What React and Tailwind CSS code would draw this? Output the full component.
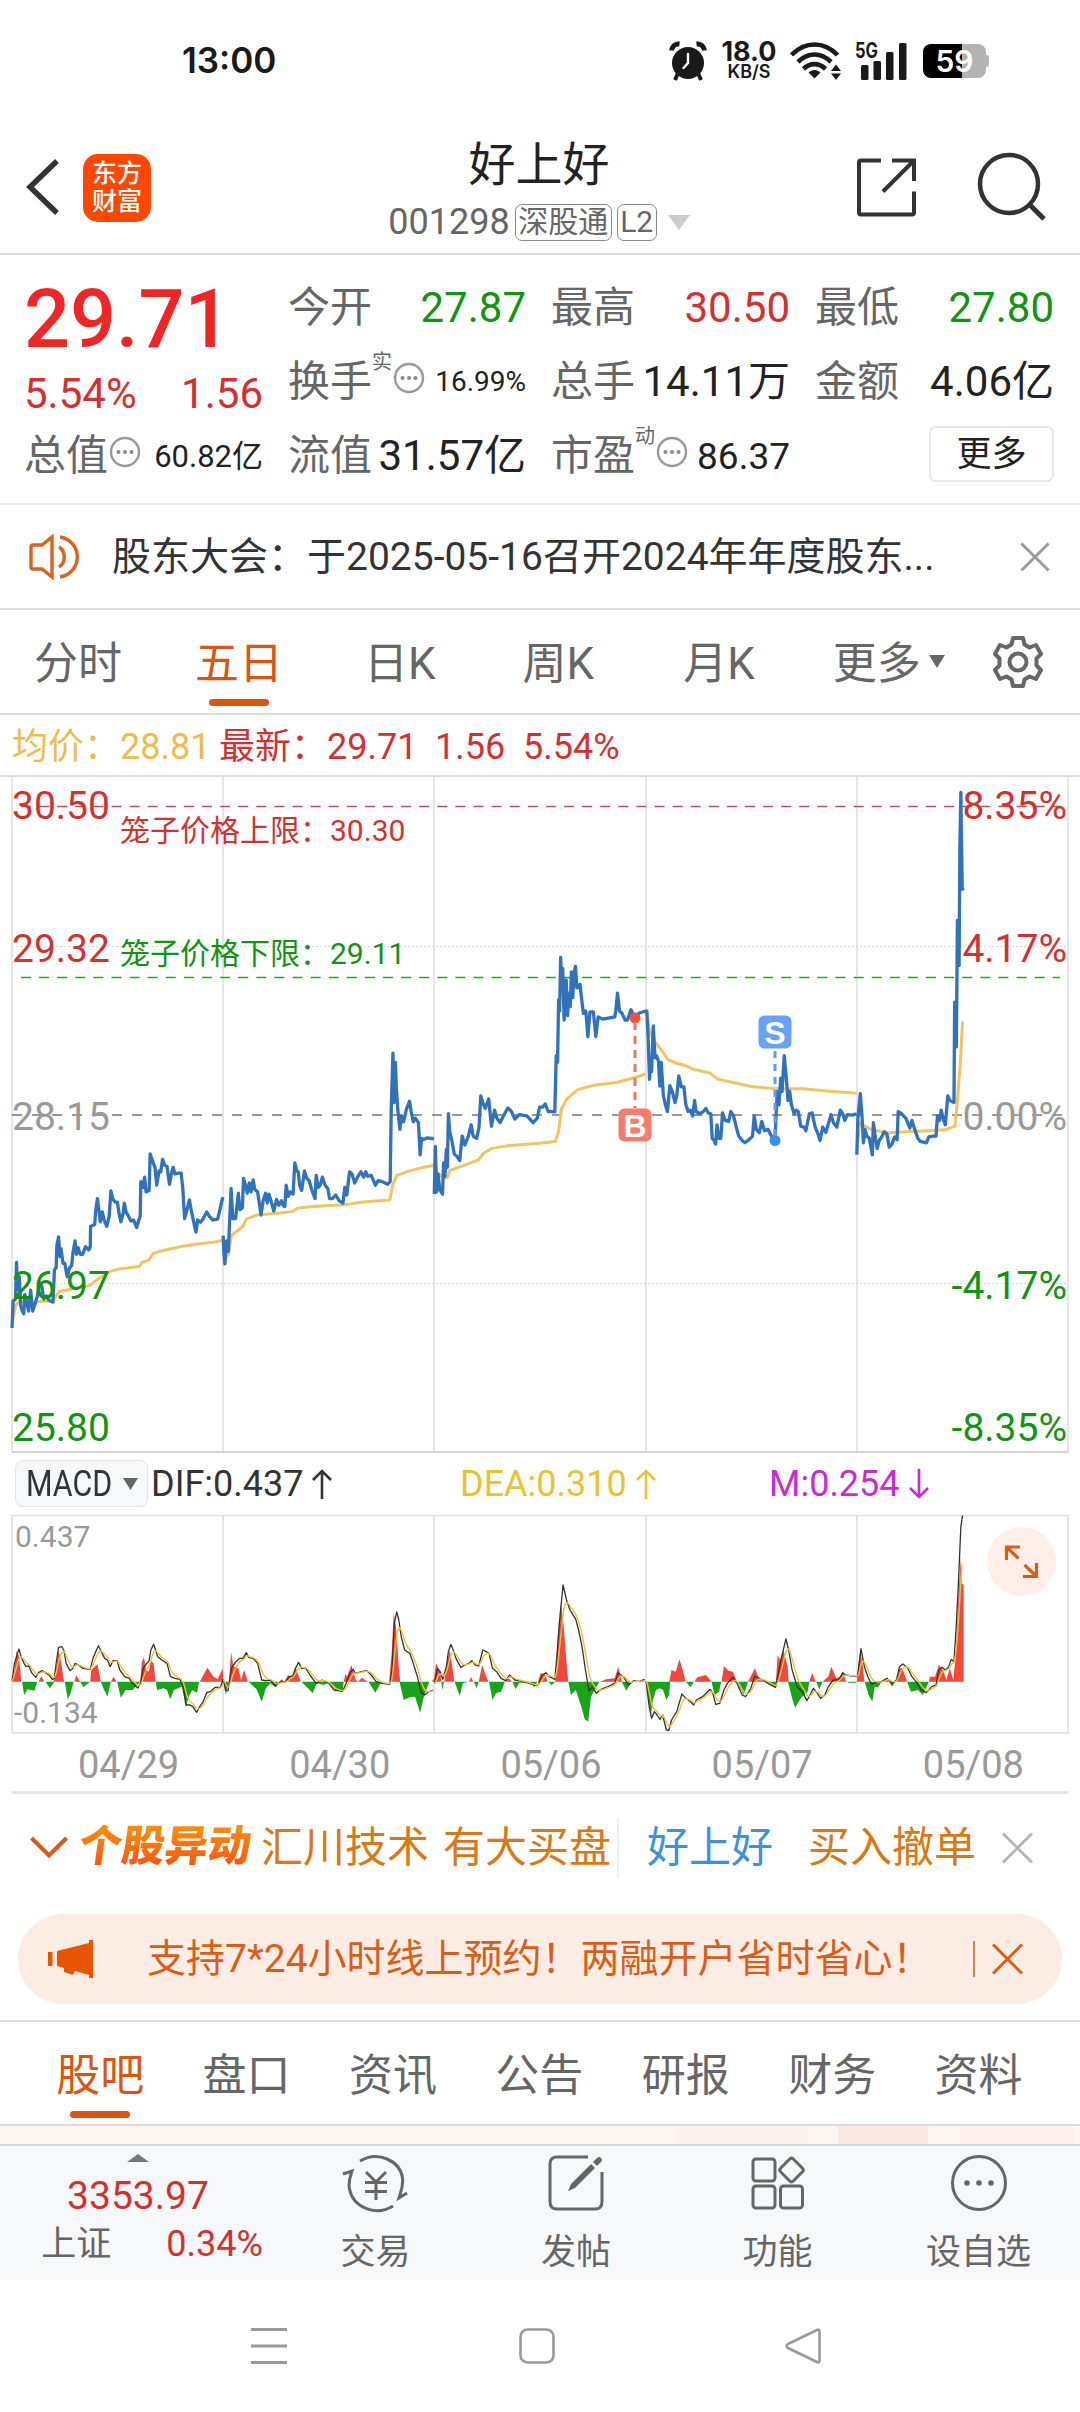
import React from 'react';

const RED = 'text-[#d3302f]';
const GREEN = 'text-[#119411]';

// Price line of every session, on a 3136 x 1568 canvas
const priceLines = [
    '35,1250 38,1190 45,1185 48,1103 51,1165 56,1135 60,1200 64,1210 69,1218 72,1175 77,1190 83,1212 89,1165 95,1212 102,1195 108,1180 114,1150 121,1155 127,1185 135,1178 142,1188 154,1192 158,1120 163,1115 165,1065 170,1046 174,1090 177,1072 183,1105 188,1105 195,1135 202,1115 208,1110 212,1080 218,1055 222,1085 227,1070 233,1085 240,1085 248,1068 258,1075 262,1068 263,1022 270,1020 275,1018 278,985 283,960 287,985 291,1012 297,990 303,1010 310,1022 317,1000 322,943 328,962 335,968 341,968 346,995 351,1012 357,995 361,970 366,990 372,998 380,1010 388,1008 397,1025 403,1008 407,1000 409,922 415,935 420,912 424,945 433,942 436,860 445,880 450,890 455,930 462,898 467,900 472,872 478,885 485,888 492,928 499,900 503,890 508,905 518,903 526,903 531,940 536,1005 543,985 550,963 555,985 559,1000 566,1025 569,1035 574,1008 582,1013 590,1005 600,990 608,1000 618,1008 632,1006 640,980 647,957',
    '648,1043 650,1080 653,1106 658,1055 663,1078 671,937 676,1005 684,1005 692,948 697,985 704,980 707,915 713,930 718,948 724,925 729,945 735,918 740,940 748,945 758,997 764,965 771,948 776,970 781,950 788,968 795,988 803,962 810,975 817,965 822,975 827,978 831,930 837,955 843,945 851,950 856,880 862,898 866,900 870,930 876,942 884,898 891,915 898,920 905,940 915,960 918,908 924,935 930,930 936,912 944,930 952,938 957,960 965,960 975,952 985,965 996,970 1001,935 1007,952 1015,900 1022,905 1030,925 1038,912 1048,900 1056,912 1062,900 1068,910 1078,908 1090,930 1098,920 1110,922 1125,928 1133,922 1136,760 1141,634 1144,745 1148,655 1151,715 1155,760 1161,805 1166,775 1172,788 1180,760 1189,742 1194,765 1200,788 1206,780 1215,790 1220,862 1224,825 1230,828 1240,824 1260,826',
    '1261,950 1264,843 1268,945 1272,905 1277,940 1285,950 1288,880 1292,910 1296,850 1299,890 1302,770 1306,810 1312,830 1319,860 1326,865 1335,875 1342,820 1350,840 1360,820 1368,795 1374,820 1384,825 1391,800 1396,730 1402,745 1409,758 1419,737 1427,798 1436,762 1443,780 1452,790 1465,770 1475,757 1485,765 1495,782 1508,772 1530,775 1548,790 1560,780 1567,755 1576,755 1583,748 1592,765 1600,765 1611,766 1615,640 1619,655 1622,515 1625,540 1628,420 1631,480 1634,445 1638,560 1644,470 1648,550 1652,500 1656,530 1659,452 1663,510 1667,455 1671,440 1675,488 1684,480 1690,520 1694,545 1701,540 1707,597 1713,542 1723,542 1730,597 1737,553 1750,558 1770,555 1785,553 1788,540 1793,500 1799,540 1806,545 1815,560 1822,560 1832,537 1843,555 1855,545 1870,541 1876,540',
    '1878,537 1882,600 1886,693 1890,650 1892,675 1897,573 1902,645 1906,640 1912,652 1916,708 1920,655 1926,728 1932,750 1938,765 1945,707 1952,720 1960,745 1965,730 1971,685 1978,710 1986,710 1991,748 1998,765 2004,762 2011,775 2017,740 2021,765 2032,770 2042,765 2050,758 2056,768 2064,770 2068,825 2074,830 2078,838 2082,795 2087,825 2093,825 2098,768 2106,785 2116,787 2122,765 2130,775 2138,800 2145,820 2155,830 2163,835 2175,828 2185,820 2190,775 2196,805 2205,812 2212,787 2220,808 2230,805 2240,820 2250,828 2253,780 2257,720 2262,750 2267,690 2271,720 2277,640 2283,688 2288,740 2293,720 2298,750 2306,770 2312,762 2318,765 2325,798 2335,800 2340,808 2350,770 2358,768 2367,800 2375,815 2381,830 2389,800 2398,812 2413,772 2420,790 2430,800 2440,762 2447,770 2453,785 2460,772 2475,773 2487,770',
    '2488,862 2491,780 2498,725 2503,775 2507,835 2512,805 2517,820 2524,825 2533,862 2536,790 2542,825 2547,848 2553,830 2560,822 2568,810 2575,815 2582,845 2590,838 2598,822 2605,828 2608,765 2618,770 2630,780 2642,802 2648,785 2656,805 2665,825 2672,832 2690,835 2697,822 2710,820 2718,820 2722,775 2728,785 2733,762 2740,785 2745,795 2752,730 2758,740 2770,745 2772,520 2777,620 2780,337 2785,438 2787,180 2790,50 2794,265 2797,270',
];

const averageLines = [
    '35,1240 45,1200 55,1190 100,1192 155,1188 172,1168 205,1163 260,1155 285,1140 320,1123 350,1117 405,1112 412,1103 432,1098 445,1083 480,1075 530,1067 580,1061 620,1058 646,1054',
    '655,1090 664,1085 672,1042 690,1032 706,1022 715,1006 745,997 790,994 850,989 865,981 920,977 1000,974 1060,967 1132,963 1140,930 1152,908 1190,898 1230,890 1260,886',
    '1266,900 1290,915 1300,912 1306,897 1340,888 1390,873 1405,858 1430,847 1480,841 1568,836 1612,832 1622,810 1630,760 1645,738 1678,716 1725,706 1790,700 1840,690 1874,681',
    '1876,535 1885,580 1895,603 1908,615 1925,632 1938,648 1965,657 1990,662 2015,671 2060,678 2083,692 2140,702 2180,709 2250,714 2330,714 2400,719 2487,724',
    '2488,850 2496,790 2505,795 2530,805 2575,813 2640,810 2700,808 2745,806 2765,800 2773,798 2780,740 2788,660 2795,563',
];

// MACD: DIF per session on a 3136 x 1020 canvas, zero level at 695
const difLines = [
    '35,693 42,640 55,597 62,622 70,640 76,650 84,648 92,668 104,682 112,668 122,662 132,668 142,675 152,688 158,685 163,640 170,592 180,590 186,603 192,640 203,662 212,655 218,640 228,645 240,655 262,658 270,625 278,605 286,587 294,605 304,625 312,630 320,650 328,632 340,632 348,660 362,680 375,685 385,700 400,714 408,700 416,655 426,640 433,632 438,600 446,583 452,600 458,620 470,630 485,640 495,680 508,685 522,688 532,710 540,765 552,765 560,770 571,787 580,770 590,755 600,728 612,724 625,712 640,712 648,688',
    '649,690 655,722 662,722 672,655 685,635 696,625 706,625 715,608 722,622 735,625 748,640 760,690 772,692 785,690 800,708 815,695 830,695 840,680 850,678 858,655 867,637 876,655 888,655 900,675 918,700 935,690 955,700 970,720 995,724 1005,700 1015,670 1025,658 1032,670 1050,665 1065,662 1078,675 1092,695 1110,700 1132,703 1138,660 1145,520 1152,486 1158,510 1165,560 1175,600 1190,610 1200,640 1212,680 1222,725 1232,735 1245,725 1258,720',
    '1262,700 1270,655 1278,665 1286,688 1296,650 1302,605 1309,583 1316,600 1324,625 1338,652 1350,645 1362,640 1370,632 1380,645 1390,648 1402,600 1412,605 1420,610 1430,655 1442,665 1455,685 1468,692 1480,675 1495,690 1520,695 1550,705 1562,705 1575,675 1585,668 1595,680 1611,688 1617,620 1624,520 1635,405 1645,450 1655,480 1660,488 1672,508 1680,540 1690,590 1700,660 1710,722 1720,712 1732,730 1745,718 1765,710 1785,700 1795,668 1810,680 1825,705 1840,692 1858,695 1872,688',
    '1876,693 1885,770 1892,805 1900,785 1908,795 1916,808 1924,795 1935,840 1942,842 1950,810 1965,785 1980,732 1992,745 2005,755 2014,765 2022,750 2040,740 2062,718 2070,730 2078,763 2090,760 2102,720 2112,700 2128,682 2140,700 2155,735 2165,740 2180,715 2192,678 2205,685 2215,690 2230,700 2252,712 2262,660 2270,620 2282,567 2290,600 2300,660 2315,710 2330,725 2343,752 2352,735 2362,715 2372,728 2383,745 2395,735 2405,710 2420,690 2435,690 2447,668 2455,675 2487,680',
    '2490,680 2500,596 2510,650 2520,680 2530,702 2545,698 2560,695 2575,685 2590,700 2603,690 2612,650 2622,642 2636,655 2648,680 2660,695 2675,720 2690,728 2705,710 2718,705 2726,660 2735,652 2745,660 2755,650 2762,628 2770,635 2776,540 2782,420 2790,230 2795,196',
];

const redBars =
    'M35,695 42,660 48,603 55,618 62,695 M112,695 120,678 128,695 M156,695 165,640 170,600 178,640 186,695 M216,695 221,676 230,690 233,695 M262,695 265,660 275,650 283,643 292,690 293,695 M322,695 330,680 338,695 M407,695 412,635 418,622 424,660 432,665 438,632 446,640 452,695 M580,695 602,653 620,680 632,688 647,655 648,695 M665,695 671,606 678,650 692,655 700,690 709,660 718,690 720,695 M810,695 818,688 826,695 836,675 848,685 858,650 868,680 873,695 M998,695 1003,672 1008,680 1020,645 1033,690 1040,695 1051,683 1068,695 M1130,695 1138,600 1143,490 1150,530 1158,650 1162,695 M1252,695 1260,688 1266,640 1278,665 1282,695 M1290,695 1298,640 1306,600 1316,670 1319,695 M1362,695 1368,680 1374,695 M1390,695 1400,645 1410,675 1418,695 M1466,695 1476,683 1486,695 M1562,695 1570,670 1582,672 1590,695 M1612,695 1620,560 1629,460 1636,520 1645,640 1650,695 M1742,695 1760,688 1785,685 1795,650 1806,695 M1845,695 1868,688 1872,695 M1943,695 1950,660 1962,665 1973,628 1985,670 1990,695 M2016,695 2025,682 2050,675 2066,695 M2095,695 2102,648 2115,662 2128,665 2140,695 M2172,695 2192,655 2205,690 2225,695 M2253,695 2258,615 2265,630 2275,600 2287,650 2290,695 M2350,695 2358,668 2368,695 M2388,695 2405,680 2414,650 2428,685 2440,680 2447,665 2457,695 M2488,695 2493,640 2498,600 2505,645 2510,695 M2563,695 2575,685 2582,695 M2602,695 2612,655 2620,655 2634,695 M2697,695 2700,680 2715,680 2726,645 2738,660 2748,690 2758,655 2768,690 2775,620 2783,440 2790,320 2792,400 2798,405 2798,695';

const greenBars =
    'M64,695 70,735 80,718 90,720 100,722 108,695 M132,695 145,715 158,695 M188,695 197,748 205,730 214,695 M233,695 242,712 262,695 M293,695 300,715 312,740 322,695 M340,695 351,743 365,720 385,720 407,695 M452,695 456,720 475,715 485,720 494,748 505,720 528,710 540,770 548,740 558,720 572,728 578,695 M650,695 656,735 664,695 M722,695 745,718 760,755 772,715 785,700 800,712 808,695 M875,695 890,710 908,730 920,700 940,705 955,697 975,720 995,722 998,695 M1070,695 1090,728 1107,695 M1160,695 1172,750 1190,742 1205,740 1220,788 1232,735 1247,695 M1281,695 1285,720 1289,695 M1320,695 1335,738 1344,700 1360,695 M1376,695 1384,715 1390,695 M1420,695 1430,750 1440,730 1455,725 1466,695 M1488,695 1497,718 1508,698 1540,698 1552,712 1560,695 M1592,695 1602,706 1612,695 M1650,695 1658,735 1672,720 1688,770 1698,808 1708,815 1716,740 1730,715 1740,695 M1805,695 1819,722 1832,695 M1876,695 1882,740 1890,795 1896,750 1905,720 1915,715 1925,720 1935,750 1943,735 1946,695 M1992,695 2005,712 2015,695 M2066,695 2075,735 2088,725 2094,695 M2140,695 2160,735 2172,695 M2220,695 2250,710 2254,695 M2288,695 2300,745 2309,773 2325,745 2345,725 2350,695 M2370,695 2379,718 2388,695 M2460,695 2465,698 2486,698 2487,695 M2511,695 2522,735 2533,755 2540,710 2550,712 2560,695 M2582,695 2590,710 2600,695 M2634,695 2645,725 2665,720 2680,735 2697,695';

// Signal line: exponential average of the DIF points, resampled at even steps
const smooth = (points, step = 3, k = 0.26) => {
    const pts = points.split(' ').map((p) => p.split(',').map(Number));
    const out = [];
    let ema = pts[0][1];
    let i = 0;
    for (let x = pts[0][0]; x <= pts[pts.length - 1][0]; x += step) {
        while (i < pts.length - 2 && pts[i + 1][0] < x) i += 1;
        const [x0, y0] = pts[i];
        const [x1, y1] = pts[i + 1];
        const y = y0 + ((y1 - y0) * (x - x0)) / (x1 - x0);
        ema += (y - ema) * k;
        out.push(`${x},${ema.toFixed(1)}`);
    }
    return out.join(' ');
};

const gridX = [12, 223, 434, 646, 857, 1068];

const Dots = () => (
    <svg className="w-[32px] h-[32px] shrink-0" viewBox="0 0 32 32" fill="none">
        <circle cx="16" cy="16" r="14" stroke="#999" strokeWidth="2.4" />
        <circle cx="9.5" cy="16" r="2" fill="#888" />
        <circle cx="16" cy="16" r="2" fill="#888" />
        <circle cx="22.5" cy="16" r="2" fill="#888" />
    </svg>
);

const Cross = ({ className, strokeWidth = 3 }) => (
    <svg className={className} viewBox="0 0 32 32" fill="none" stroke="currentColor" strokeWidth={strokeWidth}>
        <path d="M1.5 1.5L30.5 30.5M30.5 1.5L1.5 30.5" />
    </svg>
);

const StatusBar = () => (
    <div className="h-[120px] flex items-center pl-[182px] pt-px text-[#1a1a1a] font-[family-name:Inter,sans-serif]">
        <span className="w-[487px] text-[35px] font-semibold">13:00</span>
        <svg className="w-[38px] h-[40px]" viewBox="0 0 38 40">
            <circle cx="19" cy="22" r="16" fill="#1a1a1a" />
            <path d="M9 32L6 39M29 32L32 39" stroke="#1a1a1a" strokeWidth="4" />
            <path d="M2.500 9.500C3 5 6.500 2.500 10.500 3M35.500 9.500C35 5 31.500 2.500 27.500 3" stroke="#1a1a1a" strokeWidth="5" fill="none" />
            <path d="M19 13V22L14.500 27" stroke="#fff" strokeWidth="2.400" fill="none" strokeLinecap="round" />
        </svg>
        <div className="ml-[14px] w-[56px] flex flex-col items-center leading-none">
            <span className="text-[27px] leading-[22px] font-bold">18.0</span>
            <span className="text-[18px] leading-[16px] mt-px font-semibold">KB/S</span>
        </div>
        <svg className="ml-[13px] w-[54px] h-[38px]" viewBox="0 0 54 38" fill="none" stroke="#1a1a1a" strokeWidth="4.600">
            <path d="M1.500 13C15 -1 34 -1 47.500 13" />
            <path d="M8 20C18 10 31 10 41 20" />
            <path d="M13.500 27C20 20.500 29 20.500 35.500 27" />
            <path d="M24.500 36.500L18.500 30.500C22 27 27 27 30.500 30.500Z" fill="#1a1a1a" stroke="none" />
            <path d="M41 29L46 22.500L51 29ZM41 31.500L46 38L51 31.500Z" fill="#1a1a1a" stroke="none" />
        </svg>
        <svg className="ml-[11px] w-[54px] h-[38px] overflow-visible" viewBox="0 0 54 38" fill="#1a1a1a">
            <text x="0" y="15.500" fontSize="21" fontWeight="700" textLength="23" lengthAdjust="spacingAndGlyphs">5G</text>
            <rect x="6" y="23" width="7.500" height="15" rx="1.500" />
            <rect x="18.500" y="19" width="7.500" height="19" rx="1.500" />
            <rect x="31" y="10" width="7.500" height="28" rx="1.500" />
            <rect x="44" y="1" width="7.500" height="37" rx="1.500" />
        </svg>
        <div className="ml-[14px] flex items-center">
            <div className="w-[63px] h-[34px] rounded-[8px] flex items-center justify-center bg-linear-to-r from-black from-62% to-[#b3b3b3] to-62% text-white text-[30px] leading-none font-semibold">59</div>
            <div className="w-[3px] h-[12px] rounded-r-sm bg-[#b3b3b3]" />
        </div>
    </div>
);

const Header = () => (
    <header className="h-[135px] flex border-b-2 border-[#dcdcdc] pl-[26px]">
        <svg className="mt-[39px] w-[34px] h-[56px]" viewBox="0 0 34 56" fill="none" stroke="#333" strokeWidth="5.500">
            <path d="M31 2L4 28L31 54" />
        </svg>
        <div className="ml-[23px] mt-[34px] w-[68px] h-[68px] rounded-[15px] bg-[#fe4700] text-white font-medium text-[25px] leading-[28px] flex flex-col items-center justify-center">
            <span>东方</span>
            <span>财富</span>
        </div>
        <div className="w-[776px] flex flex-col items-center">
            <h1 className="mt-[19px] text-[47px] leading-[52px] text-[#222]">好上好</h1>
            <div className="mt-[10px] h-[42px] flex items-center text-[#666]">
                <span className="text-[36px] leading-none">001298</span>
                <span className="ml-[5px] w-[97px] h-[37px] rounded-[7px] border-[1.5px] border-[#888] flex items-center justify-center text-[30px] leading-none">深股通</span>
                <span className="ml-[5px] w-[40px] h-[37px] rounded-[7px] border-[1.5px] border-[#888] flex items-center justify-center text-[30px] leading-none">L2</span>
                <svg className="ml-[11px] w-[22px] h-[15px]" viewBox="0 0 22 15">
                    <path d="M0 0H22L11 15Z" fill="#ccc" />
                </svg>
            </div>
        </div>
        <svg className="-ml-[71px] mt-[37px] w-[60px] h-[60px]" viewBox="0 0 60 60" fill="none" stroke="#333" strokeWidth="4">
            <path d="M26 4H6Q4 4 4 6V56Q4 58 6 58H57Q59 58 59 56V35" transform="translate(-1 -0.500)" />
            <path d="M36 3.500H58V24M57 4.500L27 34.500" />
        </svg>
        <svg className="ml-[60px] mt-[32px] w-[70px] h-[70px]" viewBox="0 0 70 70" fill="none" stroke="#333" strokeWidth="4.500">
            <circle cx="33" cy="32" r="29" />
            <path d="M53 52L68 67" strokeWidth="5" />
        </svg>
    </header>
);

const Stat = ({ label, sup, info, value, className = 'text-[42px] text-[#222]' }) => (
    <div className="h-[74px] pt-[2px] flex items-center leading-none">
        <span className="text-[42px] text-[#666]">{label}</span>
        {sup && <span className="text-[20px] text-[#666] -mt-[40px]">{sup}</span>}
        {info && <span className="-mt-[8px] ml-px"><Dots /></span>}
        <span className={`ml-auto ${className}`}>{value}</span>
    </div>
);

const Quote = () => (
    <section className="h-[250px] pl-[24px] pt-[15px] grid grid-cols-[239px_238px_239px_239px] gap-x-[25px] border-b-2 border-[#eeeeee] items-start">
        <div>
            <div className="h-[96px] pt-[2px] flex items-center text-[81px] leading-none font-medium text-[#ee2626]">29.71</div>
            <div className={`h-[52px] pt-[3px] flex items-center justify-between text-[42px] leading-none ${RED}`}>
                <span>5.54%</span>
                <span>1.56</span>
            </div>
            <Stat label="总值" info value="60.82亿" className="text-[31px] text-[#222]" />
        </div>
        <div>
            <Stat label="今开" value="27.87" className={`text-[42px] ${GREEN}`} />
            <Stat label="换手" sup="实" info value="16.99%" className="text-[28px] text-[#222]" />
            <Stat label="流值" value="31.57亿" />
        </div>
        <div>
            <Stat label="最高" value="30.50" className={`text-[42px] ${RED}`} />
            <Stat label="总手" value="14.11万" />
            <Stat label="市盈" sup="动" info value="86.37" className="text-[37px] text-[#222]" />
        </div>
        <div>
            <Stat label="最低" value="27.80" className={`text-[42px] ${GREEN}`} />
            <Stat label="金额" value="4.06亿" />
            <button className="ml-auto mt-[8px] w-[125px] h-[56px] rounded-[7px] border-2 border-[#e8e8e8] flex items-center justify-center text-[35px] leading-none text-[#222]">更多</button>
        </div>
    </section>
);

const Notice = () => (
    <section className="h-[105px] flex items-center pl-[28px] pr-[30px] border-b-2 border-[#dcdcdc]">
        <svg className="w-[52px] h-[46px]" viewBox="0 0 52 46" fill="none" stroke="#d9621f" strokeWidth="3.400">
            <path d="M24 3L14 11H5Q3 11 3 13V33Q3 35 5 35H14L24 43Z" />
            <path d="M31 13C38 17 38 29 31 33" />
            <path d="M32 3C55 7 55 39 32 43" />
        </svg>
        <span className="ml-[32px] pt-px text-[39px] leading-none text-[#333]">股东大会：于2025-05-16召开2024年年度股东...</span>
        <Cross className="ml-auto w-[30px] h-[30px] text-[#999]" />
    </section>
);

const periods = [
    { name: '日K', className: 'ml-[81px]' },
    { name: '周K', className: 'ml-[87px]' },
    { name: '月K', className: 'ml-[89px]' },
];

const PeriodTabs = () => (
    <nav className="h-[105px] flex items-start pt-[30px] pl-[34px] text-[44px] leading-[48px] text-[#666] border-b-2 border-[#dcdcdc]">
        <span>分时</span>
        <div className="ml-[73px] flex flex-col items-center text-[#db5510]">
            <span>五日</span>
            <span className="mt-[11px] w-[60px] h-[7px] rounded-full bg-[#db5510]" />
        </div>
        {periods.map((p) => (
            <span key={p.name} className={p.className}>{p.name}</span>
        ))}
        <span className="ml-[78px]">更多</span>
        <svg className="ml-[8px] mt-[15px] w-[16px] h-[13px]" viewBox="0 0 16 13">
            <path d="M0 0H16L8 13Z" fill="#666" />
        </svg>
        <svg className="ml-[46px] -mt-[5px] w-[54px] h-[54px]" viewBox="0 0 54 54" fill="none" stroke="#666" strokeWidth="4" strokeLinejoin="round">
            <path d="M22 3H32L33.500 9.500L38.500 12.500L45 10L50 19L45.500 23.500V30.500L50 35L45 44L38.500 41.500L33.500 44.500L32 51H22L20.500 44.500L15.500 41.500L9 44L4 35L8.500 30.500V23.500L4 19L9 10L15.500 12.500L20.500 9.500Z" />
            <circle cx="27" cy="27" r="8.500" />
        </svg>
    </nav>
);

const PriceChart = () => (
    <section>
        <div className={`h-[62px] flex items-center pt-[3px] pl-[12px] text-[36px] leading-none border-b-2 border-[#dcdcdc] ${RED}`}>
            <span className="w-[207px] text-[#eebb4d]">均价：28.81</span>
            <span className="w-[216px]">最新：29.71</span>
            <span className="w-[88px]">1.56</span>
            <span>5.54%</span>
        </div>
        <svg className="block w-[1080px] h-[676px]" viewBox="0 777 1080 676" fontSize="39">
            {gridX.map((x) => (
                <path key={x} d={`M${x} 777V1452`} stroke="#dcdcdc" strokeWidth="1.500" />
            ))}
            <path d="M12 1452H1069" stroke="#d4d4d4" strokeWidth="2" />
            <path d="M12 946.500H1068M12 1283.500H1068" stroke="#d8d8d8" strokeDasharray="2 2" />
            <path d="M21 806.500H1060" stroke="#cf4a4a" strokeWidth="1.300" strokeDasharray="10 8.100" />
            <path d="M21 977.500H1060" stroke="#2aa52a" strokeWidth="1.300" strokeDasharray="10 8.100" />
            <path d="M12 1115H1066" stroke="#777" strokeWidth="1.500" strokeDasharray="10 10" />
            <g transform="translate(0 770) scale(0.34439 0.44643)" fill="none" strokeLinejoin="round">
                {averageLines.map((points) => (
                    <polyline key={points} points={points} stroke="#f3c362" strokeWidth="3" vectorEffect="non-scaling-stroke" />
                ))}
                {priceLines.map((points) => (
                    <polyline key={points} points={points} stroke="#3172bd" strokeWidth="3.300" vectorEffect="non-scaling-stroke" />
                ))}
            </g>

            {/* Buy and sell marks */}
            <g fill="#f87c6d" stroke="none">
                <circle cx="635" cy="1018" r="5.500" fill="#f4503f" />
                <path d="M635 1022V1108" stroke="#ee7468" strokeWidth="3" strokeDasharray="8 6" />
                <rect x="618.500" y="1108.500" width="33" height="33" rx="6" />
            </g>
            <g fill="#65a3f8" stroke="none">
                <circle cx="775" cy="1140.500" r="5.500" fill="#3f8cf5" />
                <path d="M775 1051V1138" stroke="#5f9cf0" strokeWidth="3" strokeDasharray="7 6" />
                <rect x="758.500" y="1015.500" width="33" height="33" rx="6" />
            </g>
            <g fill="#fff" fontFamily="Liberation Sans, sans-serif" fontSize="32" fontWeight="700" textAnchor="middle">
                <text x="635" y="1136.500">B</text>
                <text x="775" y="1043.500">S</text>
            </g>

            <g fill="#d3302f">
                <text x="12" y="819">30.50</text>
                <text x="12" y="962">29.32</text>
                <text x="120" y="841" fontSize="30">笼子价格上限：30.30</text>
            </g>
            <text x="12" y="1130" fill="#999">28.15</text>
            <g fill="#119411">
                <text x="120" y="964" fontSize="30">笼子价格下限：29.11</text>
                <text x="12" y="1299">26.97</text>
                <text x="12" y="1441">25.80</text>
            </g>
            <g textAnchor="end" fill="#d3302f">
                <text x="1067" y="819">8.35%</text>
                <text x="1067" y="962">4.17%</text>
                <text x="1067" y="1130" fill="#999">0.00%</text>
                <text x="1067" y="1299" fill="#119411">-4.17%</text>
                <text x="1067" y="1441" fill="#119411">-8.35%</text>
            </g>
        </svg>
    </section>
);

const Arrow = ({ down }) => (
    <svg className={`ml-[9px] w-[20px] h-[30px] ${down ? 'rotate-180' : ''}`} viewBox="0 0 20 30" fill="none" stroke="currentColor" strokeWidth="2.600">
        <path d="M10 30V2M1 11L10 2L19 11" />
    </svg>
);

const Macd = () => (
    <section>
        <div className="h-[62px] flex items-center pl-[15px] pb-px text-[36px] leading-none text-[#333]">
            <div className="w-[133px] h-[47px] rounded-[8px] border border-[#e3e4ea] bg-[#f7f8fa] flex items-center pl-[10px]">
                <span className="w-[98px] origin-left scale-x-[.845]">MACD</span>
                <svg className="-ml-px w-[15px] h-[12px]" viewBox="0 0 15 12">
                    <path d="M0 0H15L7.500 12Z" fill="#666" />
                </svg>
            </div>
            <div className="ml-[3px] w-[309px] flex items-center">DIF:0.437<Arrow /></div>
            <div className="w-[309px] flex items-center text-[#ebc22f]">DEA:0.310<Arrow /></div>
            <div className="flex items-center text-[#cb2ad3]">M:0.254<Arrow down /></div>
        </div>
        <svg className="block w-[1080px] h-[219px]" viewBox="0 1515 1080 219">
            {gridX.map((x) => (
                <path key={x} d={`M${x} 1515V1733`} stroke="#dcdcdc" strokeWidth="1.500" />
            ))}
            <path d="M12 1515.500H1068M12 1733H1069" stroke="#dcdcdc" strokeWidth="1.500" />
            <g fontSize="30" fill="#999">
                <text x="15" y="1547">0.437</text>
                <text x="14" y="1723">-0.134</text>
            </g>
            <g transform="translate(0 1450) scale(0.34439 0.33333)">
                <path d={redBars} fill="#f2463f" />
                <path d={greenBars} fill="#18a318" />
                <g fill="none" strokeLinejoin="round">
                    {difLines.map((points) => (
                        <polyline key={points} points={points} stroke="#333" strokeWidth="1.300" vectorEffect="non-scaling-stroke" />
                    ))}
                    {difLines.map((points) => (
                        <polyline key={points} points={smooth(points)} stroke="#efc13a" strokeWidth="1.400" vectorEffect="non-scaling-stroke" />
                    ))}
                </g>
            </g>
            <circle cx="1021.500" cy="1561.500" r="34.500" fill="#fef0e9" />
            <path d="M1020 1547H1006.500V1560M1006.500 1547L1018.500 1558.500M1023 1576.500H1036.500V1563M1036.500 1576.500L1024.500 1565" fill="none" stroke="#db5c17" strokeWidth="3.200" />
        </svg>
        <div className="h-[60px] mx-[12px] grid grid-cols-5 border-b-3 border-[#e6e6e6] text-[38px] leading-[62px] text-[#999]">
            {['04/29', '04/30', '05/06', '05/07', '05/08'].map((day) => (
                <span key={day} className="pl-[66px]">{day}</span>
            ))}
        </div>
    </section>
);

const Alerts = () => (
    <section className="h-[120px] pb-[13px] flex items-center pl-[30px] pr-[46px] text-[42px] leading-none text-[#d97814]">
        <svg className="w-[38px] h-[24px]" viewBox="0 0 38 24" fill="none" stroke="#d9581c" strokeWidth="4">
            <path d="M1.500 2L19 19.500L36.500 2" />
        </svg>
        <span className="ml-[11px] w-[182px] pb-[2px] -skew-x-8 text-[43px] font-black bg-linear-to-b from-[#f5900f] to-[#ff4a0f] bg-clip-text text-transparent">个股异动</span>
        <span>汇川技术</span>
        <span className="ml-[14px]">有大买盘</span>
        <span className="ml-[6px] w-[2px] h-[60px] bg-[#eeeeee]" />
        <span className="ml-[28px] text-[#3c91de]">好上好</span>
        <span className="ml-[35px]">买入撤单</span>
        <Cross className="ml-auto w-[33px] h-[32px] text-[#b5b5b5]" />
    </section>
);

const Promo = () => (
    <section className="mx-[18px] h-[90px] rounded-full bg-[#fcede4] flex items-center pl-[30px] pr-[38px] text-[#db5c17]">
        <svg className="w-[46px] h-[40px]" viewBox="0 0 46 40" fill="#ea5504">
            <path d="M0 13H4.500V27H0ZM9 12L41 4V1H45V39H41V36L27 32L25 36L16 33V29L9 27Z" />
        </svg>
        <span className="ml-[53px] pt-px text-[39px] leading-none">支持7*24小时线上预约！两融开户省时省心！</span>
        <span className="ml-auto w-[2px] h-[36px] bg-[#e08050]" />
        <Cross className="ml-[16px] w-[33px] h-[32px]" />
    </section>
);

const sections = ['股吧', '盘口', '资讯', '公告', '研报', '财务', '资料'];

const SectionTabs = () => (
    <>
        <nav className="mt-[16px] h-[106px] pl-[27px] grid grid-cols-[repeat(7,146.4px)] content-start pt-[30px] border-y-2 border-[#dcdcdc] text-[44px] leading-[48px] text-[#666]">
            {sections.map((name, i) => (
                <div key={name} className={i === 0 ? 'flex flex-col items-center text-[#db5510]' : 'flex flex-col items-center'}>
                    <span>{name}</span>
                    {i === 0 && <span className="mt-[11px] w-[60px] h-[7px] rounded-full bg-[#db5510]" />}
                </div>
            ))}
        </nav>
        <div className="h-[18px] flex bg-[#fff6f4]">
            <span className="ml-[676px] w-[132px] bg-[#fef1ee]" />
            <span className="ml-[30px] w-[90px] bg-[#fbe6e3]" />
            <span className="ml-[32px] w-[115px] bg-[#feefec]" />
        </div>
    </>
);

const Action = ({ name, className, children }) => (
    <div className={`${className} pt-[7px] flex flex-col items-center text-[35px] leading-none text-[#666]`}>
        <svg className="w-[68px] h-[60px]" viewBox="0 0 68 60" fill="none" stroke="#666" strokeWidth="3">
            {children}
        </svg>
        <span className="mt-[22px]">{name}</span>
    </div>
);

const BottomBar = () => (
    <footer className="h-[136px] bg-[#f7f8fa] border-t-2 border-[#d8d8d8] flex">
        <div className="w-[276px] flex flex-col items-center leading-none">
            <svg className="mt-[8px] w-[22px] h-[8px]" viewBox="0 0 22 8">
                <path d="M0 8H22L11 0Z" fill="#777" />
            </svg>
            <span className={`mt-[15px] text-[39px] ${RED}`}>3353.97</span>
            <div className="mt-[10px] ml-[28px] flex items-center">
                <span className="w-[125px] text-[35px] text-[#666]">上证</span>
                <span className={`text-[36px] ${RED}`}>0.34%</span>
            </div>
        </div>
        <Action name="交易" className="w-[199px]">
            <path d="M18 8C36 -3 58 8 60.500 25C61.500 33 59 38 57 45L65 40M51 53C33 64 11 54 7.500 36C6 29 8 24 10 18L1 21" />
            <path d="M24 19L34 29L44 19M23 29.500H45M23 38.500H45M34 29V47" />
        </Action>
        <Action name="发帖" className="w-[202px]">
            <path d="M46 4H15Q8 4 8 11V49Q8 56 15 56H53Q60 56 60 49V19" />
            <path d="M26 38L29 31L49 11L53 15L33 35ZM51 9L55 5Q57 3 59 5Q61 7 59 9L55 13Z" fill="#666" stroke="none" />
        </Action>
        <Action name="功能" className="w-[201px]">
            <rect x="9" y="6" width="22" height="22" rx="3" />
            <rect x="9" y="33" width="22" height="22" rx="3" />
            <rect x="36.500" y="33" width="22" height="22" rx="3" />
            <rect x="38.500" y="8" width="18" height="18" rx="2.500" transform="rotate(45 47.500 17)" />
        </Action>
        <Action name="设自选" className="w-[201px]">
            <circle cx="34" cy="30" r="26.500" />
            <g fill="#666" stroke="none">
                <circle cx="22" cy="30" r="2.800" />
                <circle cx="34" cy="30" r="2.800" />
                <circle cx="46" cy="30" r="2.800" />
            </g>
        </Action>
    </footer>
);

const SystemNav = () => (
    <div className="h-[131px] flex items-center pl-[250px] text-[#999]">
        <svg className="w-[38px] h-[38px]" viewBox="0 0 38 38" fill="none" stroke="currentColor" strokeWidth="3">
            <path d="M1 2.500H37M1 19H37M1 35.500H37" />
        </svg>
        <svg className="ml-[230px] w-[38px] h-[38px]" viewBox="0 0 38 38" fill="none" stroke="currentColor" strokeWidth="2.600">
            <rect x="2.500" y="2.500" width="33" height="33" rx="7" />
        </svg>
        <svg className="ml-[228px] w-[38px] h-[38px]" viewBox="0 0 38 38" fill="none" stroke="currentColor" strokeWidth="2.600" strokeLinejoin="round">
            <path d="M33 3Q35.500 1.500 35.500 5V33Q35.500 36.500 33 35L4 21Q1 19 4 17Z" />
        </svg>
    </div>
);

const App = () => (
    <div className="w-[1080px] h-[2412px] overflow-hidden bg-white font-[family-name:Roboto,'Noto_Sans_CJK_SC',sans-serif]">
        <StatusBar />
        <Header />
        <Quote />
        <Notice />
        <PeriodTabs />
        <PriceChart />
        <Macd />
        <Alerts />
        <Promo />
        <SectionTabs />
        <BottomBar />
        <SystemNav />
    </div>
);

export default App;
